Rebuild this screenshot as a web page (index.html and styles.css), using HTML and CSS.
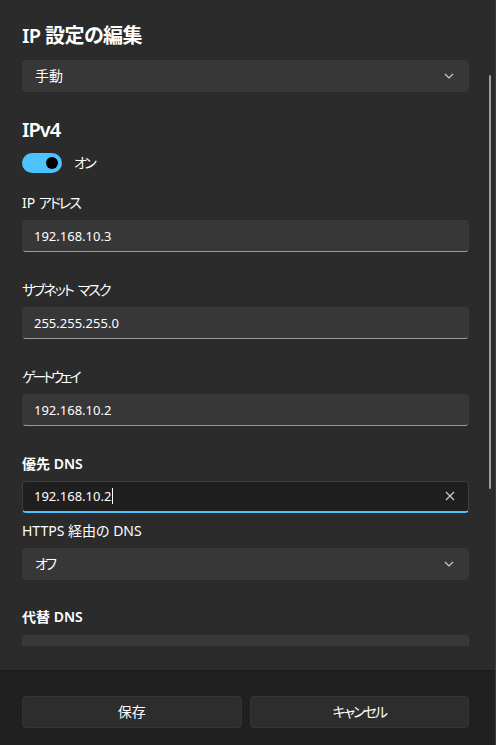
FILE: index.html
```html
<!DOCTYPE html>
<html lang="ja">
<head>
<meta charset="utf-8">
<title>IP 設定の編集</title>
<link rel="stylesheet" href="styles.css">
</head>
<body>
<div class="dialog">
  <div class="content">
    <div class="scroll">
      <h1 class="title">IP 設定の編集</h1>
      <div class="combo mt10"><span>手動</span>
        <svg class="chev" width="10" height="6" viewBox="0 0 10 6"><path d="M1 1 L5 5 L9 1" fill="none" stroke="#cfcfcf" stroke-width="1.1"/></svg>
      </div>

      <h2 class="section">IPv4</h2>
      <div class="toggle-row">
        <span class="toggle"><span class="knob"></span></span>
        <span class="toggle-label kn25">オン</span>
      </div>

      <div class="label mt20">IP <span class="kn">アドレス</span></div>
      <div class="field">192.168.10.3</div>

      <div class="label mt28"><span class="kn">サブネット</span><span class="gap"></span><span class="kn">マスク</span></div>
      <div class="field">255.255.255.0</div>

      <div class="label mt28"><span class="kn3">ゲートウェイ</span></div>
      <div class="field">192.168.10.2</div>

      <div class="label strong mt28">優先 DNS</div>
      <div class="field focused"><span class="value">192.168.10.2<span class="caret"></span></span>
        <svg class="clear" width="10" height="10" viewBox="0 0 10 10"><path d="M1 1 L9 9 M9 1 L1 9" fill="none" stroke="#d0d0d0" stroke-width="1.1"/></svg>
      </div>

      <div class="label mt8">HTTPS 経由の DNS</div>
      <div class="combo"><span class="kn25">オフ</span>
        <svg class="chev" width="10" height="6" viewBox="0 0 10 6"><path d="M1 1 L5 5 L9 1" fill="none" stroke="#cfcfcf" stroke-width="1.1"/></svg>
      </div>

      <div class="label strong mt27">代替 DNS</div>
      <div class="field mt8"></div>
    </div>
    <div class="scrollbar"></div>
  </div>
  <div class="footer">
    <button class="btn">保存</button>
    <button class="btn"><span class="kn">キャンセル</span></button>
  </div>
</div>
</body>
</html>
```
FILE: styles.css
```css
* { box-sizing: border-box; margin: 0; padding: 0; }
html, body { width: 496px; height: 745px; overflow: hidden; }
body {
  background: #2b2b2b;
  color: #ffffff;
  font-family: "Segoe UI", "Noto Sans", "Noto Sans CJK JP", sans-serif;
  font-size: 14px;
  font-feature-settings: "palt";
}
.kn { letter-spacing: -2px; }
.kn25 { letter-spacing: -2.5px; }
.kn3 { letter-spacing: -3px; }
.gap { display: inline-block; width: 5px; }
.dialog {
  width: 496px;
  height: 745px;
  display: flex;
  flex-direction: column;
  border-right: 1px solid #3a3a3a;
}
.content {
  position: relative;
  height: 670px;
  padding-bottom: 24px;
  flex: none;
}
.scroll {
  height: 646px;
  overflow: hidden;
  padding: 22px 26px 0 22px;
  display: flex;
  flex-direction: column;
}
.title {
  font-size: 20px;
  font-weight: 600;
  line-height: 28px;
  height: 28px;
  letter-spacing: -0.6px;
}
.section {
  font-size: 20px;
  font-weight: 600;
  line-height: 28px;
  height: 28px;
  margin-top: 24px;
  letter-spacing: -1px;
}
.mt8 { margin-top: 8px; }
.mt10 { margin-top: 10px; }
.mt20 { margin-top: 20px; }
.mt27 { margin-top: 27px; }
.mt28 { margin-top: 28px; }
.combo {
  flex: none;
  height: 32px;
  border-radius: 4px;
  background: #373737;
  border: 1px solid #3a3a3a;
  display: flex;
  align-items: center;
  justify-content: space-between;
  padding: 0 14px 0 12px;
  line-height: 20px;
}
.combo.mt10 { margin-top: 10px; }
.combo:not(.mt10) { margin-top: 7px; }
.chev { display: block; }
.toggle-row {
  display: flex;
  align-items: center;
  height: 20px;
  margin-top: 9px;
}
.toggle {
  width: 40px;
  height: 20px;
  border-radius: 10px;
  background: #4cc2ff;
  position: relative;
  flex: none;
}
.knob {
  position: absolute;
  width: 12px;
  height: 12px;
  border-radius: 50%;
  background: #000;
  top: 4px;
  left: 24px;
}
.toggle-label {
  margin-left: 12px;
  line-height: 20px;
}
.label {
  line-height: 20px;
  height: 20px;
  flex: none;
}
.label.strong { font-weight: 600; }
.field {
  flex: none;
  height: 32px;
  margin-top: 7px;
  border-radius: 4px;
  background: #373737;
  border: 1px solid #3a3a3a;
  border-bottom: 1px solid #9a9a9a;
  display: flex;
  align-items: center;
  padding: 0 12px 0 11px;
  line-height: 20px;
  font-size: 13px;
}
.field.mt8 { margin-top: 8px; }
.field.focused {
  background: #1f1f1f;
  border: 1px solid #3d3d3d;
  border-bottom: 2px solid #4cc2ff;
  justify-content: space-between;
  padding-bottom: 1px;
}
.value { display: inline-flex; align-items: center; }
.caret {
  display: inline-block;
  width: 1px;
  height: 16px;
  background: #ffffff;
  margin-left: 1px;
}
.clear { display: block; margin-right: 1px; }
.scrollbar {
  position: absolute;
  left: 489px;
  top: 75px;
  width: 2px;
  height: 414px;
  border-radius: 1px;
  background: #9d9d9d;
}
.footer {
  flex: 1;
  background: #202020;
  border-top: 1px solid #1c1c1c;
  padding: 25px 26px 0 22px;
  display: flex;
  gap: 8px;
  align-items: flex-start;
}
.btn {
  flex: 1;
  height: 32px;
  border-radius: 4px;
  background: #2d2d2d;
  border: 1px solid #353535;
  color: #ffffff;
  font: inherit;
  font-size: 14px;
  line-height: 20px;
}
```
